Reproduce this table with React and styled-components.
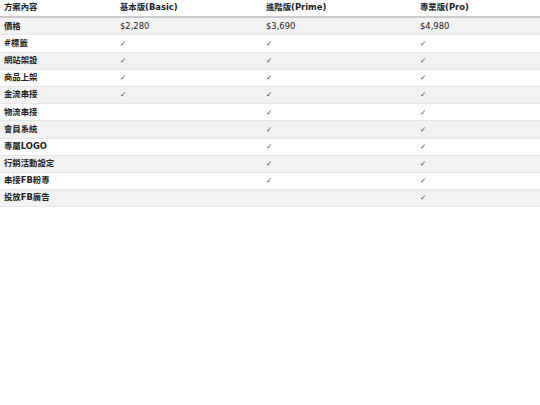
import React from "react";
import styled, { createGlobalStyle } from "styled-components";

const Global = createGlobalStyle`
  html, body { margin: 0; padding: 0; background: #fff; }
  body { font-family: "DejaVu Sans", "Noto Sans CJK TC", sans-serif; color: #222; }
`;

const Table = styled.table`
  width: 540px;
  border-collapse: collapse;
  table-layout: fixed;
  font-family: "DejaVu Sans", "Noto Sans CJK TC", sans-serif;
  font-size: 8.4px;
  line-height: 9.4px;
`;

const Col = styled.col`
  width: ${(p) => p.$w}px;
`;

const HeadCell = styled.th`
  text-align: left;
  font-weight: bold;
  padding: 3.4px 4px;
  border-bottom: 2px solid #cbcbcb;
  white-space: nowrap;
`;

const Row = styled.tr`
  background: ${(p) => (p.$striped ? "#f2f2f2" : "#ffffff")};
`;

const LabelCell = styled.th`
  text-align: left;
  font-weight: bold;
  padding: 3.4px 4px;
  border-bottom: 1px solid #e6e6e6;
  white-space: nowrap;
`;

const Cell = styled.td`
  padding: 3.4px 4px;
  border-bottom: 1px solid #e6e6e6;
  white-space: nowrap;
`;

const Check = styled.span`
  font-family: "DejaVu Sans", sans-serif;
  color: #444;
  font-size: 7.5px;
`;

const plans = ["基本版(Basic)", "進階版(Prime)", "專業版(Pro)"];

const rows = [
  ["價格", "$2,280", "$3,690", "$4,980"],
  ["#標籤", "✓", "✓", "✓"],
  ["網站架設", "✓", "✓", "✓"],
  ["商品上架", "✓", "✓", "✓"],
  ["金流串接", "✓", "✓", "✓"],
  ["物流串接", "", "✓", "✓"],
  ["會員系統", "", "✓", "✓"],
  ["專屬LOGO", "", "✓", "✓"],
  ["行銷活動設定", "", "✓", "✓"],
  ["串接FB粉專", "", "✓", "✓"],
  ["投放FB廣告", "", "", "✓"],
];

const renderValue = (v) => (v === "✓" ? <Check>✓</Check> : v);

export default function App() {
  return (
    <>
      <Global />
      <Table>
        <colgroup>
          <Col $w={116} />
          <Col $w={146} />
          <Col $w={154} />
          <Col $w={124} />
        </colgroup>
        <thead>
          <tr>
            <HeadCell>方案內容</HeadCell>
            {plans.map((p) => (
              <HeadCell key={p}>{p}</HeadCell>
            ))}
          </tr>
        </thead>
        <tbody>
          {rows.map((r, i) => (
            <Row key={r[0]} $striped={i % 2 === 0}>
              <LabelCell>{r[0]}</LabelCell>
              <Cell>{renderValue(r[1])}</Cell>
              <Cell>{renderValue(r[2])}</Cell>
              <Cell>{renderValue(r[3])}</Cell>
            </Row>
          ))}
        </tbody>
      </Table>
    </>
  );
}
